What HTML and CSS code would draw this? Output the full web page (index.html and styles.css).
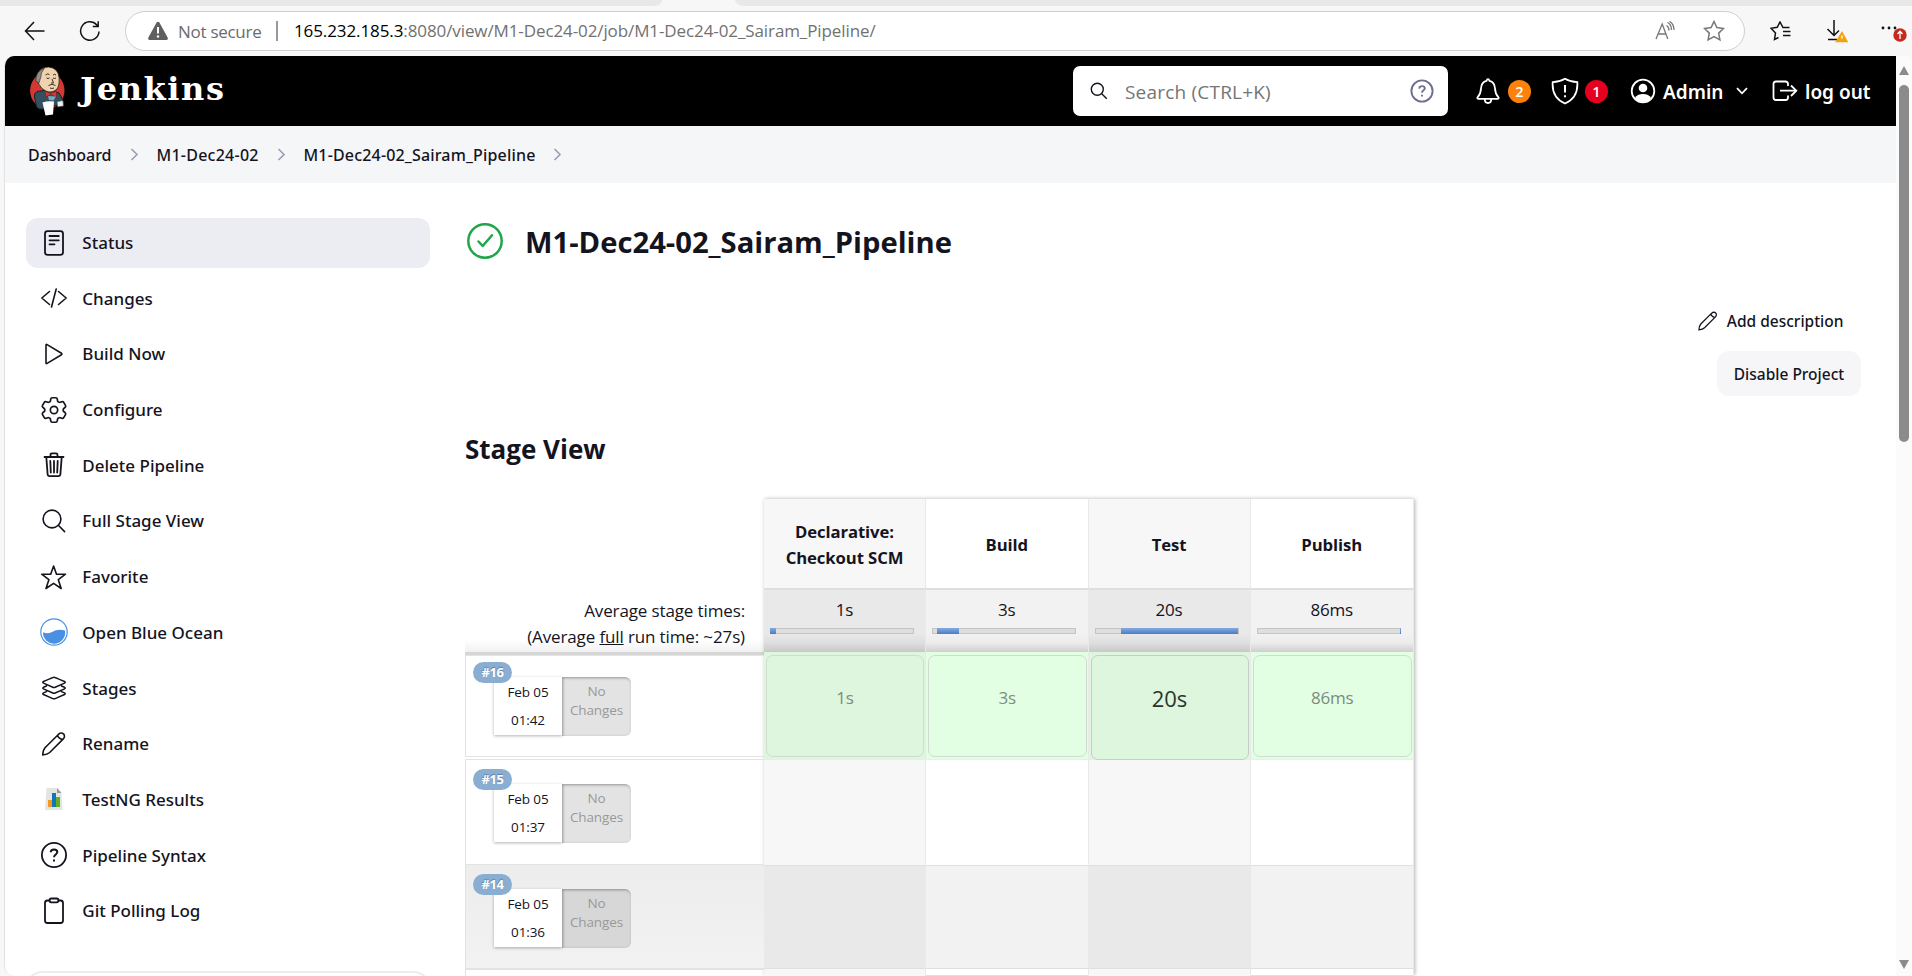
FILE: index.html
```html
<!DOCTYPE html>
<html lang="en">
<head>
<meta charset="utf-8">
<title>M1-Dec24-02_Sairam_Pipeline [Jenkins]</title>
<link rel="stylesheet" href="styles.css">
</head>
<body>
<div class="tabstrip"><i class="tab-rest left"></i><i class="tab-rest right"></i></div>
<div class="toolbar">
  <svg class="back" width="22" height="20" viewBox="0 0 22 20"><path d="M10 1 1.500 10 10 19M1.500 10H20.500"/></svg>
  <svg class="reload" width="22" height="22" viewBox="0 0 22 22"><path d="M20 11.500A9.200 9.200 0 1 1 17.600 4.800L19 6.400M19.200 1.200V6.600H13.800"/></svg>
  <div class="urlbar">
    <svg class="alert" width="22" height="20" viewBox="0 0 22 20"><path d="M9.600 1.500Q11 -.2 12.400 1.500L20.600 16.500Q21.500 19 19 19H3Q.5 19 1.400 16.500Z" fill="#5f5f5f"/><path d="M10 6H12V12.500H10Z" fill="#fff"/><circle cx="11" cy="15.500" r="1.200" fill="#fff"/></svg>
    <span class="insecure">Not secure</span>
    <i class="sep"></i>
    <span class="url"><b>165.232.185.3</b>:8080/view/M1-Dec24-02/job/M1-Dec24-02_Sairam_Pipeline/</span>
    <svg class="aloud" width="20" height="20" viewBox="0 0 20 20"><path d="M1 18 7.200 3 12.800 18M3 13H11M11.500 4.500Q14 6 14 9.500M12.500 1.500Q16.500 3.500 16.500 9M14.500 .5Q19 3 19 9"/></svg>
    <svg class="fav" width="22" height="22" viewBox="0 0 22 22"><path d="M11 1.500 13.900 7.600 20.500 8.500 15.700 13.100 16.900 19.800 11 16.600 5.100 19.800 6.300 13.100 1.500 8.500 8.100 7.600Z"/></svg>
  </div>
  <svg class="favs" width="22" height="20" viewBox="0 0 22 20"><path d="M19.500 6.500H13L10 1 7.200 6.300 1 7.300 5.500 12 4.500 18.500 8.500 16.500M13 10.500H20.500M13 14.500H20.500"/></svg>
  <svg class="download" width="24" height="24" viewBox="0 0 24 24"><path d="M8 1V16M1.500 10 8 16.500 13 11.500M2 20.500H11"/><path d="M16 13.500 21 22.500H10.500Z" class="warn"/><path d="M15.900 16.500V19.500" class="bang"/></svg>
  <svg class="more" width="28" height="28" viewBox="0 0 28 28"><circle cx="3" cy="11" r="1.400"/><circle cx="9" cy="11" r="1.400"/><circle cx="15" cy="11" r="1.400"/><circle cx="20" cy="18" r="6.700" fill="#c42b1c"/><path d="M20 22V14.500M17.500 17 20 14.300 22.500 17" fill="none" stroke="#fff" stroke-width="1.300"/></svg>
</div>
<div class="viewport">
  <div class="page">
    <header class="header">
      <svg class="butler" width="36" height="50" viewBox="0 0 36 50">
        <ellipse cx="18.300" cy="24.500" rx="17.200" ry="18.500" fill="#d33833"/>
        <path d="M8 25.500Q5 27 5.500 31L7.500 41Q10 44 15 43L29 39 34 34 30 27 20 24Z" fill="#335061" stroke="#14202a" stroke-width="1"/>
        <path d="M8.500 12Q9 1 19.500 1 29 2 30 11 31 20 27 24 20 29 12.500 22 8 17 8.500 12Z" fill="#eed3ae" stroke="#2b2118" stroke-width=".8"/>
        <path d="M6.800 15Q6.500 5 15.500 2 11.500 7 11.800 11L10 17Z" fill="#8d8d8d" stroke="#2b2118" stroke-width=".6"/>
        <path d="M16.500 9Q18.500 7 20.500 8.500M24 9Q26 7.500 27 9M17.500 12Q19 13 20.500 12M24 12Q25.500 13 27 12M23 13 24.500 17H22M19.500 19.500Q23 17 26.500 19.500M21 22Q23 23 25 22" fill="none" stroke="#2b2118" stroke-width=".9"/>
        <path d="M16 25 21.500 27.500 27.500 25V31L21.500 28.500 17 31Z" fill="#d33833" stroke="#6d1512" stroke-width=".5"/>
        <path d="M19 30 27 30.500 24.500 34.500 20 34Z" fill="#7ba7c0"/>
        <path d="M13.500 36.500Q19 34.500 25 35.500L24 48.500 16.500 49.500Z" fill="#fff"/>
        <path d="M28 35.500 34 34.500 34.500 40 28.500 41Z" fill="#eee" stroke="#444" stroke-width=".7"/>
      </svg>
      <span class="brand">Jenkins</span>
      <div class="search">
        <svg width="18" height="18" viewBox="0 0 18 18"><circle cx="7.300" cy="7.300" r="6"/><path d="M11.700 11.700 16.800 16.800"/></svg>
        <span>Search (CTRL+K)</span>
        <svg class="help" width="24" height="24" viewBox="0 0 24 24"><circle cx="12" cy="12" r="10.600"/><path d="M9.200 9.600Q9.400 7.100 12 7.100 14.800 7.100 14.800 9.500C14.800 11.300 12 11.500 12 13.700M12 15.800V17.400"/></svg>
      </div>
      <svg class="bell" width="26" height="28" viewBox="0 0 26 28"><path d="M13 2.200C14 2.200 14.300 3.400 14.500 3.800 18.500 4.800 19.800 8 20 11.500 20.300 17 21.500 18.300 23.300 20.200 24 21 23.800 21.800 22.800 21.800H3.200C2.200 21.800 2 21 2.700 20.200 4.500 18.300 5.700 17 6 11.500 6.200 8 7.500 4.800 11.500 3.800 11.700 3.400 12 2.200 13 2.200ZM9.700 22Q9.700 26 13 26T16.300 22"/></svg>
      <span class="count orange">2</span>
      <svg class="shield" width="28" height="28" viewBox="0 0 28 28"><path d="M14 1.800Q19.500 5 26.300 5.200C27 15 23 22.500 14 26.500 5 22.500 1 15 1.700 5.200Q8.500 5 14 1.800Z"/><path d="M14 8V15.500M14 18.300V20.300" class="thick"/></svg>
      <span class="count red">1</span>
      <svg class="user" width="26" height="26" viewBox="0 0 26 26"><circle cx="13" cy="13" r="11.300"/><circle cx="13" cy="10" r="4.300" class="solid"/><path d="M5 20Q7 16 13 16T21 20Q18 24 13 24T5 20Z" class="solid"/></svg>
      <b class="who">Admin</b>
      <svg class="caret" width="12" height="8" viewBox="0 0 12 8"><path d="M1 1.200 6 6.300 11 1.200"/></svg>
      <svg class="exit" width="26" height="22" viewBox="0 0 26 22"><path d="M16 6V4Q16 1.500 13.500 1.500H4Q1.500 1.500 1.500 4V17.500Q1.500 20 4 20H13.500Q16 20 16 17.500V15.500M8 10.700H24M19 5.500 24.300 10.700 19 16"/></svg>
      <b class="logout">log out</b>
    </header>
    <nav class="crumbs">
      <span>Dashboard</span><svg width="9" height="13" viewBox="0 0 9 13"><path d="M1.500 1 7 6.500 1.500 12"/></svg>
      <span class="c2">M1-Dec24-02</span><svg width="9" height="13" viewBox="0 0 9 13"><path d="M1.500 1 7 6.500 1.500 12"/></svg>
      <span class="c3">M1-Dec24-02_Sairam_Pipeline</span><svg width="9" height="13" viewBox="0 0 9 13"><path d="M1.500 1 7 6.500 1.500 12"/></svg>
    </nav>
    <div class="body">
      <aside class="side">
        <a class="task active"><svg viewBox="0 0 28 28"><rect x="5" y="2.200" width="18" height="23.600" rx="2.500"/><path d="M9.500 7H18.800M9.500 11.300H18.800M9.500 15.300H14.500"/></svg>Status</a>
        <a class="task"><svg viewBox="0 0 28 28"><path d="M9.500 7.500 1.800 14 9.500 20.500M18.500 7.500 26.200 14 18.500 20.500M16.200 5 11.500 23" class="thin"/></svg>Changes</a>
        <a class="task"><svg viewBox="0 0 28 28"><path d="M6 5.200V22.800Q6 24 7.100 23.400L21.500 14.700Q22.300 14 21.500 13.300L7.100 4.600Q6 4 6 5.200Z" class="thin"/></svg>Build Now</a>
        <a class="task"><svg viewBox="1.700 1.700 20.600 20.600"><path class="gear" d="M9.594 3.940c.09-.542.56-.94 1.110-.94h2.593c.55 0 1.020.398 1.110.94l.213 1.281c.063.374.313.686.645.87.074.04.147.083.22.127.325.196.72.257 1.075.124l1.217-.456a1.125 1.125 0 0 1 1.370.49l1.296 2.247a1.125 1.125 0 0 1-.26 1.431l-1.003.827c-.293.241-.438.613-.43.992a7.723 7.723 0 0 1 0 .255c-.008.378.137.75.43.991l1.004.827c.424.35.534.955.26 1.430l-1.298 2.247a1.125 1.125 0 0 1-1.369.491l-1.217-.456c-.355-.133-.75-.072-1.076.124a6.470 6.470 0 0 1-.22.128c-.331.183-.581.495-.644.869l-.213 1.281c-.09.543-.56.94-1.110.94h-2.594c-.55 0-1.019-.398-1.110-.94l-.213-1.281c-.062-.374-.312-.686-.644-.87a6.520 6.520 0 0 1-.22-.127c-.325-.196-.72-.257-1.076-.124l-1.217.456a1.125 1.125 0 0 1-1.369-.49l-1.297-2.247a1.125 1.125 0 0 1 .26-1.431l1.004-.827c.292-.24.437-.613.43-.991a6.932 6.932 0 0 1 0-.255c.007-.38-.138-.751-.43-.992l-1.004-.827a1.125 1.125 0 0 1-.26-1.430l1.297-2.247a1.125 1.125 0 0 1 1.370-.491l1.216.456c.356.133.751.072 1.076-.124.072-.044.146-.086.22-.128.332-.183.582-.495.644-.869l.214-1.280Z"/><circle cx="12" cy="12" r="2.700" class="gear"/></svg>Configure</a>
        <a class="task"><svg viewBox="0 0 28 28"><path d="M4.500 6H23.500M6.300 6 7.600 23Q7.700 25.200 9.800 25.200H18.200Q20.300 25.200 20.400 23L21.700 6M10.500 6V3.800Q10.500 2.300 12 2.300H16Q17.500 2.300 17.500 3.800V6M10.300 10 10.800 21.500M14 10V21.500M17.700 10 17.200 21.500"/></svg>Delete Pipeline</a>
        <a class="task"><svg viewBox="0 0 28 28"><circle cx="12" cy="12" r="8.900" class="thin"/><path d="M18.300 18.300 24.600 24.600" class="thin"/></svg>Full Stage View</a>
        <a class="task"><svg viewBox="0 0 28 28"><path d="M13.600 3 16.500 11.200H25.500L18.300 16.700 21.200 25.500 13.600 20.300 6 25.500 8.900 16.700 1.700 11.200H10.700Z" class="thin"/></svg>Favorite</a>
        <a class="task"><svg viewBox="0 0 28 28"><circle cx="14" cy="14" r="13.200" class="ring"/><path d="M3 14.300Q7 16 11.500 14.300 18 10.500 25 12.500A11.100 11.100 0 1 1 3 14.300Z" fill="#4a90e2" stroke="none"/></svg>Open Blue Ocean</a>
        <a class="task"><svg viewBox="0 0 28 28"><path class="layers" d="M14 3.300Q14.500 3.300 24.500 7.500 26 8.300 24.500 9.100L15.200 13.200Q14 13.700 12.800 13.200L3.500 9.100Q2 8.300 3.500 7.500 13.500 3.300 14 3.300ZM6.500 12 3.500 13.300Q2 14.100 3.500 14.900L12.800 19Q14 19.500 15.200 19L24.500 14.900Q26 14.100 24.500 13.300L21.500 12M6.500 17.600 3.500 18.900Q2 19.700 3.500 20.500L12.800 24.600Q14 25.100 15.200 24.600L24.500 20.500Q26 19.700 24.500 18.900L21.500 17.600"/></svg>Stages</a>
        <a class="task"><svg viewBox="0 0 28 28"><path d="M2.700 25Q3 20 5 17.800L18.600 4.200Q20.600 2.500 22.500 3.300 24.700 4.300 24.500 6.300 24.500 7.500 23.300 8.900L9.700 22.500Q7.500 24.600 2.700 25ZM17.500 5.300Q18.800 9 22.700 9.500" class="thin"/></svg>Rename</a>
        <a class="task"><svg viewBox="0 0 28 28"><path d="M6.500 3H17L21.500 8 22.500 25H5Z" fill="#e4e4e4" stroke="none"/><path d="M17 3 21.500 8H17Z" fill="#999" stroke="none"/><path d="M8 15H12V22H8Z" fill="#f39a1b" stroke="none"/><path d="M12 8H16V22H12Z" fill="#1474b8" stroke="none"/><path d="M16 12H20V22H16Z" fill="#62b021" stroke="none"/></svg>TestNG Results</a>
        <a class="task"><svg viewBox="0 0 28 28"><circle cx="14" cy="14" r="12.100"/><path class="query" d="M10.700 11.300Q10.800 8.400 14 8.400 17.300 8.400 17.300 11.100C17.300 13.500 14 13.500 14 16.300M14 18.400V20.600"/></svg>Pipeline Syntax</a>
        <a class="task"><svg viewBox="0 0 28 28"><path d="M9.500 3.500H7.500Q5 3.500 5 6V23.500Q5 26 7.500 26H20.500Q23 26 23 23.500V6Q23 3.500 20.500 3.500H18.500"/><rect x="9.500" y="1.500" width="9" height="3.800" rx="1.700"/></svg>Git Polling Log</a>
        <div class="history"></div>
      </aside>
      <main class="main">
        <h1><svg width="36" height="36" viewBox="0 0 36 36"><circle cx="18" cy="18" r="16.700"/><path d="M11.500 18.500 15.700 23 25 12.300"/></svg>M1-Dec24-02_Sairam_Pipeline</h1>
        <div class="actions">
          <a class="describe"><svg width="20" height="20" viewBox="1.500 1.500 25 25"><path d="M2.700 25Q3 20 5 17.800L18.600 4.200Q20.600 2.500 22.500 3.300 24.700 4.300 24.500 6.300 24.500 7.500 23.300 8.900L9.700 22.500Q7.500 24.600 2.700 25ZM17.500 5.300Q18.800 9 22.700 9.500"/></svg>Add description</a>
          <a class="disable">Disable Project</a>
        </div>
        <h2>Stage View</h2>
        <div class="stageview">
          <div class="runs">
            <div class="averages">Average stage times:<br>(Average <u>full</u> run time: ~27s)</div>
            <div class="run r16"><span class="badge">#16</span><div class="date">Feb 05<br>01:42</div><div class="nochange">No<br>Changes</div></div>
            <div class="run r15"><span class="badge">#15</span><div class="date">Feb 05<br>01:37</div><div class="nochange">No<br>Changes</div></div>
            <div class="run r14"><span class="badge">#14</span><div class="date">Feb 05<br>01:36</div><div class="nochange">No<br>Changes</div></div>
            <div class="run last"></div>
          </div>
          <div class="stages">
            <div class="name">Declarative:<br>Checkout SCM</div><div class="name">Build</div><div class="name">Test</div><div class="name">Publish</div>
            <div class="avg">1s<div class="bar b1"><i></i></div></div>
            <div class="avg">3s<div class="bar b2"><i></i></div></div>
            <div class="avg">20s<div class="bar b3"><i></i></div></div>
            <div class="avg">86ms<div class="bar b4"><i></i></div></div>
            <div class="ok"><span>1s</span></div><div class="ok"><span>3s</span></div><div class="ok longest"><span>20s</span></div><div class="ok"><span>86ms</span></div>
            <div class="none"></div><div class="none"></div><div class="none"></div><div class="none"></div>
            <div class="dim"></div><div class="dim"></div><div class="dim"></div><div class="dim"></div>
            <div class="none"></div><div class="none"></div><div class="none"></div><div class="none"></div>
          </div>
        </div>
      </main>
    </div>
  </div>
  <div class="scroll"><i class="up"></i><i class="thumb"></i><i class="down"></i></div>
</div>
</body>
</html>
```
FILE: styles.css
```css
* { box-sizing: border-box; }
body { margin: 0; width: 1912px; height: 976px; overflow: hidden; background: #f7f7f7; color: #14141f; font-family: "Open Sans", "Noto Sans", sans-serif; }
svg { flex: none; fill: none; stroke: currentColor; display: block; }

.tabstrip { display: flex; justify-content: space-between; height: 6px; }
.tab-rest { background: #e8e8e8; height: 6px; }
.tab-rest.left { width: 662px; border-bottom-right-radius: 8px 6px; }
.tab-rest.right { width: 1177px; border-bottom-left-radius: 10px 6px; }

.toolbar { display: flex; align-items: center; height: 50px; color: #111; }
.toolbar svg { stroke-width: 1.5; }
.back { margin-left: 24px; }
.reload { margin-left: 33px; }
.urlbar { display: flex; align-items: center; width: 1620px; height: 40px; margin-left: 24px; padding-left: 21px; border: 1px solid #cfcfcf; border-radius: 20px; background: #fff; white-space: nowrap; }
.toolbar .alert { stroke: none; }
.insecure { width: 84px; margin-left: 9px; font-size: 17px; letter-spacing: -.28px; color: #6b6b6b; }
.sep { width: 2px; height: 20px; margin-left: 14px; background: #999; }
.url { width: 582px; margin: -2px 0 0 16px; font-size: 17px; letter-spacing: -.1px; color: #717171; }
.url b { font-weight: 400; color: #000; }
.urlbar .aloud { margin-left: 779px; color: #767676; stroke-width: 1.3; }
.urlbar .fav { margin-left: 28px; color: #767676; stroke-width: 1.5; }
.favs { margin-left: 25px; }
.download { margin-left: 34px; }
.download .warn { fill: #f7a10a; stroke: #f7a10a; }
.download .bang { stroke: #fff; stroke-width: 1.4; }
.toolbar .more { margin-left: 30px; fill: #111; stroke: none; }

.viewport { display: flex; height: 920px; padding-left: 4px; }
.page { width: 1892px; height: 920px; overflow: hidden; border-radius: 10px 0 0 10px; background: #fff; border-left: 1px solid #e2e2e2; }
.scroll { display: flex; flex-direction: column; align-items: center; width: 16px; background: #fbfbfb; border-top-right-radius: 8px; }
.up { width: 0; height: 0; margin-top: 10px; border: 5.500px solid transparent; border-top: 0; border-bottom: 9px solid #8b8b8b; }
.thumb { width: 10px; height: 357px; margin-top: 10px; border-radius: 5px; background: #8b8b8b; }
.down { margin-top: 518px; border: 5.500px solid transparent; border-bottom: 0; border-top: 9px solid #8b8b8b; }

.header { display: flex; align-items: center; height: 70px; margin-left: -1px; padding-left: 25px; background: #000; color: #fff; font-size: 19px; }
.header svg { stroke-width: 1.8; }
.header .butler { stroke: none; }
.brand { width: 150px; margin: -5px 0 0 15px; font: bold 32px "DejaVu Serif", serif; letter-spacing: 1.600px; }
.search { display: flex; align-items: center; width: 375px; height: 50px; margin-left: 843px; padding-left: 17px; border-radius: 7px; background: #fff; color: #14141f; }
.search span { width: 146px; margin: 1px 0 0 17px; letter-spacing: .2px; color: #757575; white-space: nowrap; }
.search svg { stroke-width: 1.4; }
.search .help { margin-left: 139px; color: #6f6f93; stroke-width: 1.9; }
.bell { margin-left: 27px; }
.count { width: 23px; height: 23px; margin-left: 7px; border-radius: 50%; font: 600 14.500px/23px "Open Sans", sans-serif; text-align: center; }
.orange { background: #fe820a; }
.red { background: #e6001f; margin-left: 6px; }
.shield { margin-left: 20px; }
.thick { stroke-width: 2; }
.user { margin-left: 22px; }
.solid { fill: #fff; stroke: none; }
.header b { padding-top: 1px; font-family: "Noto Sans", sans-serif; font-weight: 600; white-space: nowrap; }
.who { margin-left: 7px; width: 60px; }
.caret { margin-left: 13px; }
.exit { margin-left: 24px; }
.logout { margin-left: 7px; }

.crumbs { display: flex; align-items: center; height: 57px; padding-left: 23px; background: #f5f6f8; font: 500 16px "Noto Sans", sans-serif; }
.crumbs span { width: 83px; white-space: nowrap; letter-spacing: -.05px; }
.crumbs svg { margin: 0 18px 0 18.500px; color: #9c9cb4; stroke-width: 1.6; }
.crumbs .c2 { width: 101.500px; letter-spacing: .25px; }
.crumbs .c3 { width: 231px; letter-spacing: .17px; }

.body { display: flex; padding: 35px 0 0 21px; }
.side { width: 404px; }
.task { display: flex; align-items: center; gap: 14.300px; height: 50px; margin-bottom: 5.700px; padding: 0 0 1px 14px; border-radius: 12px; font: 500 17px "Noto Sans", sans-serif; }
.task.active { background: #ecedf3; }
.task svg { width: 28px; height: 28px; stroke-width: 1.8; stroke-linecap: round; stroke-linejoin: round; }
.task .thin { stroke-width: 1.6; }
.task .gear { stroke-width: 1.250; }
.task .ring { stroke: #4a90e2; stroke-width: 1.2; }
.task .layers { stroke-width: 1.5; }
.task .query { stroke-width: 2; stroke-linecap: butt; }
.history { height: 60px; margin-top: 35px; border: 2px solid #ececf2; border-radius: 16px; }

.main { display: flex; flex-direction: column; flex: 1; margin-left: 35px; }
h1 { display: flex; align-items: center; height: 48px; margin: 0; padding-left: 2px; gap: 22px; font-size: 29.200px; font-weight: 700; }
h1 svg { color: #1ea64b; stroke-width: 2.500; stroke-linecap: round; stroke-linejoin: round; margin-top: -2px; }
.actions { display: flex; flex-direction: column; align-items: flex-end; padding: 31px 35px 0 0; font: 500 15.500px "Noto Sans", sans-serif; }
.describe { display: flex; align-items: center; gap: 9px; height: 48px; margin-right: 17.500px; }
.describe svg { stroke-width: 1.600; }
.disable { width: 144px; height: 45px; margin-top: 6px; border-radius: 12px; background: #f6f6f9; line-height: 46px; text-align: center; }
h2 { margin: 35px 0 0; height: 37px; font-size: 26px; line-height: 36px; }

.stageview { display: flex; height: 476px; margin-top: 31px; font-size: 17px; }
.runs { width: 299px; }
.averages { height: 156px; padding: 99px 19px 0 0; border-bottom: 3px solid #d6d6d6; background: linear-gradient(#fff 92%, #f1f1f1); line-height: 26px; text-align: right; letter-spacing: -.13px; white-space: nowrap; }
.run { position: relative; display: flex; height: 102px; padding: 21px 0 0 28px; border: 1px solid #e3e3e3; border-right: 0; }
.r15 { height: 105px; margin-top: 2px; padding-top: 24px; border-bottom: 0; }
.r14 { height: 105px; padding-top: 24px; background: linear-gradient(#ededed, #f2f2f2); }
.run.last { height: 60px; }
.badge { position: absolute; left: 7px; top: 8.500px; width: 39px; height: 21px; border-radius: 10.500px; background: #8aadd2; color: #fff; font-size: 13px; font-weight: 700; line-height: 21px; text-align: center; letter-spacing: -.4px; text-shadow: 0 -1px 1px #5d7f9f; }
.r16 .badge { top: 6px; }
.date { width: 68px; height: 58px; padding-top: 1px; background: #fff; box-shadow: 0 1px 3px rgba(0, 0, 0, .3); font-size: 13.500px; line-height: 28px; text-align: center; letter-spacing: -.1px; }
.nochange { width: 69px; height: 59px; padding-top: 5px; border-radius: 0 6px 6px 0; background: #e3e3e3; box-shadow: inset 1px 1px 3px rgba(0, 0, 0, .35); color: #999; font-size: 13.500px; line-height: 19px; text-align: center; letter-spacing: -.1px; }
.r14 .nochange { background: #d7d7d7; }

.stages { display: grid; grid-template-columns: 162px 162.500px 162px 163.500px; grid-template-rows: 89px 64px 108px 104.500px 104.500px 60px; width: 650px; box-shadow: 1px 0 4px rgba(0, 0, 0, .3); background: #fff; text-align: center; }
.stages > div { border-right: 1px solid #e9e9e9; }
.name { display: flex; align-items: center; justify-content: center; padding-top: 3px; font-size: 16.700px; font-weight: 700; line-height: 26px; letter-spacing: -.1px; }
.name:nth-child(odd), .none:nth-child(odd) { background: #f7f7f7; }
.avg { padding-top: 8px; border-top: 2px solid #dedede; background: linear-gradient(#f2f2f2 70%, #ececec 85%, #cfcfcf); line-height: 24px; letter-spacing: -.2px; }
.avg:nth-child(odd) { background: linear-gradient(#e9e9e9 70%, #dfdfdf 85%, #c8c8c8); }
.bar { width: 144px; height: 6px; margin: 6px 0 0 6px; background: #dedede; border: 1px solid #c4c4c4; }
.bar i { display: block; height: 6px; margin-top: -1px; background: linear-gradient(#82abdb, #4a7ccd); }
.b1 i { width: 6px; margin-left: -1px; }
.b2 i { width: 22px; margin-left: 4px; }
.b3 i { width: 117px; margin-left: 25px; }
.b4 i { width: 1px; margin-left: 142px; }
.ok { padding: 3px 1px 3px 2px; background: #e3ffe3; border-bottom: 1px solid #ececec; }
.ok:nth-child(odd) { background: #ddf6dd; }
.ok span { display: block; height: 102px; border: 1px solid #d0dcd2; border-radius: 7px; color: #7c8c7e; line-height: 83px; letter-spacing: -.2px; }
.ok.longest span { height: 105px; border-color: #c3cfc4; color: #2b352f; font-size: 22px; line-height: 84px; letter-spacing: 0; }
.dim { border: solid #e0e0e0; border-width: 1px 0; background: #f2f2f2; }
.dim:nth-child(odd) { background: #e9e9e9; }
```
